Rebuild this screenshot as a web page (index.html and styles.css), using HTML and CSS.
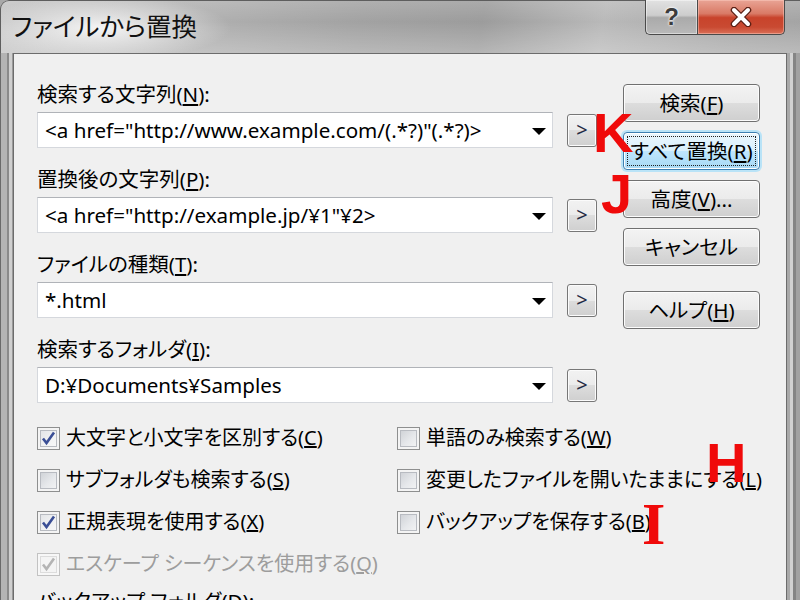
FILE: index.html
```html
<!DOCTYPE html>
<html lang="ja">
<head>
<meta charset="utf-8">
<title>ファイルから置換</title>
<link rel="stylesheet" href="styles.css">
</head>
<body>
<div class="window">
  <div class="titlebar">
    <div class="title">ファイルから置換</div>
    <div class="caption">
      <div class="cap-btn cap-help"><span class="q">?</span></div>
      <div class="cap-btn cap-close">
        <svg width="22" height="20" viewBox="0 0 22 20">
          <path d="M4 3 L18 17 M18 3 L4 17" stroke="#5a1f14" stroke-width="6.5" stroke-linecap="round" fill="none"/>
          <path d="M4 3 L18 17 M18 3 L4 17" stroke="#ffffff" stroke-width="4" stroke-linecap="round" fill="none"/>
        </svg>
      </div>
    </div>
  </div>
  <div class="frame">
    <div class="edge-left"></div>
    <div class="client">
      <div class="main">
        <div class="fields">
          <div class="field">
            <div class="label">検索する文字列(<u>N</u>):</div>
            <div class="combo-row">
              <div class="combo"><span class="value">&lt;a href="http://www.example.com/(.*?)"(.*?)&gt;</span><svg class="arrow" width="14" height="7" viewBox="0 0 14 7"><path d="M0 0H14L7 7Z" fill="#000"/></svg></div>
              <div class="more">&gt;</div>
            </div>
          </div>
          <div class="field">
            <div class="label">置換後の文字列(<u>P</u>):</div>
            <div class="combo-row">
              <div class="combo"><span class="value">&lt;a href="http://example.jp/¥1"¥2&gt;</span><svg class="arrow" width="14" height="7" viewBox="0 0 14 7"><path d="M0 0H14L7 7Z" fill="#000"/></svg></div>
              <div class="more">&gt;</div>
            </div>
          </div>
          <div class="field">
            <div class="label">ファイルの種類(<u>T</u>):</div>
            <div class="combo-row">
              <div class="combo"><span class="value">*.html</span><svg class="arrow" width="14" height="7" viewBox="0 0 14 7"><path d="M0 0H14L7 7Z" fill="#000"/></svg></div>
              <div class="more">&gt;</div>
            </div>
          </div>
          <div class="field">
            <div class="label">検索するフォルダ(<u>I</u>):</div>
            <div class="combo-row">
              <div class="combo"><span class="value">D:¥Documents¥Samples</span><svg class="arrow" width="14" height="7" viewBox="0 0 14 7"><path d="M0 0H14L7 7Z" fill="#000"/></svg></div>
              <div class="more">&gt;</div>
            </div>
          </div>
        </div>
        <div class="buttons">
          <div class="btn">検索(<u>F</u>)</div>
          <div class="btn btn-focus"><span class="focus-rect">すべて置換(<u>R</u>)</span></div>
          <div class="btn">高度(<u>V</u>)...</div>
          <div class="btn">キャンセル</div>
          <div class="btn btn-help">ヘルプ(<u>H</u>)</div>
        </div>
      </div>
      <div class="options">
        <div class="opt"><span class="cb checked"><svg width="21" height="21" viewBox="0 0 21 21"><path d="M5 10.5 L8.5 15 L16 4.5" stroke="#3b4f96" stroke-width="2.6" fill="none"/></svg></span><span>大文字と小文字を区別する(<u>C</u>)</span></div>
        <div class="opt"><span class="cb"></span><span>単語のみ検索する(<u>W</u>)</span></div>
        <div class="opt"><span class="cb"></span><span>サブフォルダも検索する(<u>S</u>)</span></div>
        <div class="opt"><span class="cb"></span><span>変更したファイルを開いたままにする(<u>L</u>)</span></div>
        <div class="opt"><span class="cb checked"><svg width="21" height="21" viewBox="0 0 21 21"><path d="M5 10.5 L8.5 15 L16 4.5" stroke="#3b4f96" stroke-width="2.6" fill="none"/></svg></span><span>正規表現を使用する(<u>X</u>)</span></div>
        <div class="opt"><span class="cb"></span><span>バックアップを保存する(<u>B</u>)</span></div>
        <div class="opt disabled"><span class="cb checked"><svg width="21" height="21" viewBox="0 0 21 21"><path d="M5 10.5 L8.5 15 L16 4.5" stroke="#b4b4b4" stroke-width="2.6" fill="none"/></svg></span><span>エスケープ シーケンスを使用する(<u>Q</u>)</span></div>
      </div>
      <div class="label bottom-label">バックアップ フォルダ(<u>D</u>):</div>
    </div>
    <div class="edge-right"></div>
  </div>
  <div class="mark mark-k">K</div>
  <div class="mark mark-j">J</div>
  <div class="mark mark-h">H</div>
  <div class="mark mark-i">I</div>
</div>
</body>
</html>
```
FILE: styles.css
```css
body {
  margin: 0;
  background: #a8a8a8;
}

.window {
  position: relative;
  width: 800px;
  height: 600px;
  overflow: hidden;
  font-family: "Noto Sans", "Noto Sans CJK JP", sans-serif;
  font-size: 20.5px;
  color: #000;
  background: #a9a9a9;
  border-top-left-radius: 9px;
}

.titlebar {
  height: 53px;
  display: flex;
  justify-content: space-between;
  align-items: flex-start;
  box-sizing: border-box;
  border-top: 1px solid #5e5e5e;
  border-left: 1px solid #5e5e5e;
  border-top-left-radius: 9px;
  background:
    radial-gradient(ellipse 130px 32px at 100px 27px, rgba(255,255,255,0.85), rgba(255,255,255,0) 100%),
    linear-gradient(to bottom, rgba(255,255,255,0.15), rgba(255,255,255,0) 40%, rgba(255,255,255,0.25) 100%),
    linear-gradient(100deg, #c4c4c4 0%, #b0b0b0 25%, #a2a2a2 45%, #9c9c9c 60%, #b9b9b9 75%, #aaaaaa 90%, #a4a4a4 100%);
}

.title {
  padding: 8px 0 0 10px;
  font-family: "Noto Sans CJK JP", sans-serif;
  font-size: 25.5px;
  line-height: 32px;
  font-feature-settings: "palt";
  color: #111;
}

.caption {
  display: flex;
  margin-right: 15px;
  margin-top: -1px;
}

.cap-btn {
  height: 35px;
  box-sizing: border-box;
  display: flex;
  align-items: center;
  justify-content: center;
  border: 1px solid #4a4a4a;
  border-top: 0;
}

.cap-help {
  width: 52px;
  border-bottom-left-radius: 5px;
  border-right: 0;
  background: linear-gradient(to bottom, #e2e2e2 0%, #cdcdcd 45%, #aaaaaa 52%, #b9b9b9 100%);
  box-shadow: inset 0 0 0 1px rgba(255,255,255,0.45);
}

.cap-help .q {
  font-family: "Liberation Sans", sans-serif;
  font-weight: bold;
  font-size: 24px;
  line-height: 24px;
  color: #3c3c3c;
  text-shadow: 0 0 2px #fff, 0 0 3px #fff;
}

.cap-close {
  width: 88px;
  border-bottom-right-radius: 5px;
  background: linear-gradient(to bottom, #e9a495 0%, #d97a66 40%, #c8432b 52%, #c94a32 80%, #da7058 100%);
  box-shadow: inset 0 0 0 1px rgba(255,210,200,0.45);
}

.frame {
  display: flex;
  height: 547px;
}

.edge-left {
  width: 13px;
  flex: none;
  background: linear-gradient(to right, #6a6a6a 0 1px, #b4b4b4 1px 7px, #8a8a8a 7px 9px, #cfcfcf 9px 12px, #9a9a9a 12px 13px);
}

.edge-right {
  width: 15px;
  flex: none;
  background: linear-gradient(to right, #a8a8a8 0 3px, #d2d2d2 3px 6px, #858585 6px 9px, #a2a2a2 9px 15px);
}

.client {
  flex: 1;
  box-sizing: border-box;
  background: #f0f0f0;
  border: 1px solid #6c6c6c;
  border-bottom: 0;
  padding: 28px 24px 0 23px;
}

.main {
  display: flex;
  gap: 26px;
}

.fields {
  width: 560px;
  display: flex;
  flex-direction: column;
  gap: 19px;
}

.label {
  line-height: 24px;
  height: 24px;
  white-space: nowrap;
  font-feature-settings: "palt";
}

.field .label {
  margin-bottom: 6px;
}

.combo-row {
  display: flex;
  align-items: center;
  gap: 14px;
}

.combo {
  width: 516px;
  height: 36px;
  box-sizing: border-box;
  display: flex;
  align-items: center;
  justify-content: space-between;
  padding: 0 6px 0 7px;
  background: #fff;
  border: 1px solid #d5d8dd;
  border-top-color: #b0b3b8;
  white-space: nowrap;
}

.combo .value {
  line-height: 24px;
  font-size: 20.6px;
}

.arrow {
  flex: none;
  margin-top: 2px;
}

.more {
  width: 30px;
  height: 33px;
  box-sizing: border-box;
  display: flex;
  align-items: center;
  justify-content: center;
  border: 1px solid #777;
  border-radius: 3px;
  background: linear-gradient(to bottom, #f2f2f2 0%, #ebebeb 50%, #dddddd 50%, #cfcfcf 100%);
  box-shadow: inset 0 0 0 1px #fbfbfb;
  font-size: 20px;
  color: #1f2a44;
  padding-bottom: 2px;
}

.buttons {
  width: 137px;
  flex: none;
  display: flex;
  flex-direction: column;
  gap: 10px;
  padding-top: 2px;
}

.btn {
  height: 38px;
  box-sizing: border-box;
  display: flex;
  align-items: center;
  justify-content: center;
  border: 1px solid #707070;
  border-radius: 4px;
  background: linear-gradient(to bottom, #f3f3f3 0%, #ebebeb 50%, #dddddd 50%, #cfcfcf 100%);
  box-shadow: inset 0 0 0 1px #fcfcfc;
  white-space: nowrap;
  font-feature-settings: "palt";
  line-height: 24px;
}

.btn-focus {
  border-color: #3c7fb1;
  background: linear-gradient(to bottom, #eaf6fd 0%, #d9f0fc 50%, #bee6fd 50%, #a7d9f5 100%);
  box-shadow: 0 0 0 2px #b9e3f7, inset 0 0 0 1px #ffffff;
  padding: 3px;
}

.focus-rect {
  flex: 1;
  align-self: stretch;
  display: flex;
  align-items: center;
  justify-content: center;
  border: 1px dotted #222;
}

.btn-help {
  margin-top: 15px;
}

.options {
  margin-top: 14px;
  display: grid;
  grid-template-columns: 360px 1fr;
  grid-auto-rows: 42px;
  font-size: 20px;
}

.opt {
  display: flex;
  align-items: center;
  gap: 6px;
  white-space: nowrap;
  line-height: 24px;
  font-feature-settings: "palt";
}

.cb {
  width: 23px;
  height: 23px;
  flex: none;
  box-sizing: border-box;
  display: flex;
  align-items: center;
  justify-content: center;
  border: 1px solid #8e8f8f;
  background: linear-gradient(135deg, #c9ccd1 0%, #e6e8eb 55%, #f7f7f7 100%);
  box-shadow: inset 0 0 0 2px #f4f4f4, inset 0 0 0 3px #b8bbc1;
}

.cb.checked {
  background: linear-gradient(135deg, #dfe1e4 0%, #f1f2f3 55%, #fbfbfb 100%);
}

.opt.disabled {
  color: #9d9d9d;
}

.opt.disabled .cb {
  border-color: #c2c2c2;
  background: #f4f4f4;
  box-shadow: inset 0 0 0 2px #f7f7f7, inset 0 0 0 3px #dcdcdc;
}

.bottom-label {
  margin-top: 4px;
}

.mark {
  position: absolute;
  color: #f00a0a;
  font-family: "Liberation Sans", sans-serif;
  font-weight: bold;
  font-size: 56px;
  line-height: 56px;
}

.mark-k { left: 593px; top: 105px; }
.mark-j { left: 601px; top: 166px; }
.mark-h { left: 706px; top: 435px; }

.mark-i {
  left: 642px;
  top: 494px;
  font-family: "Liberation Serif", serif;
  font-size: 60px;
  line-height: 60px;
}
```
